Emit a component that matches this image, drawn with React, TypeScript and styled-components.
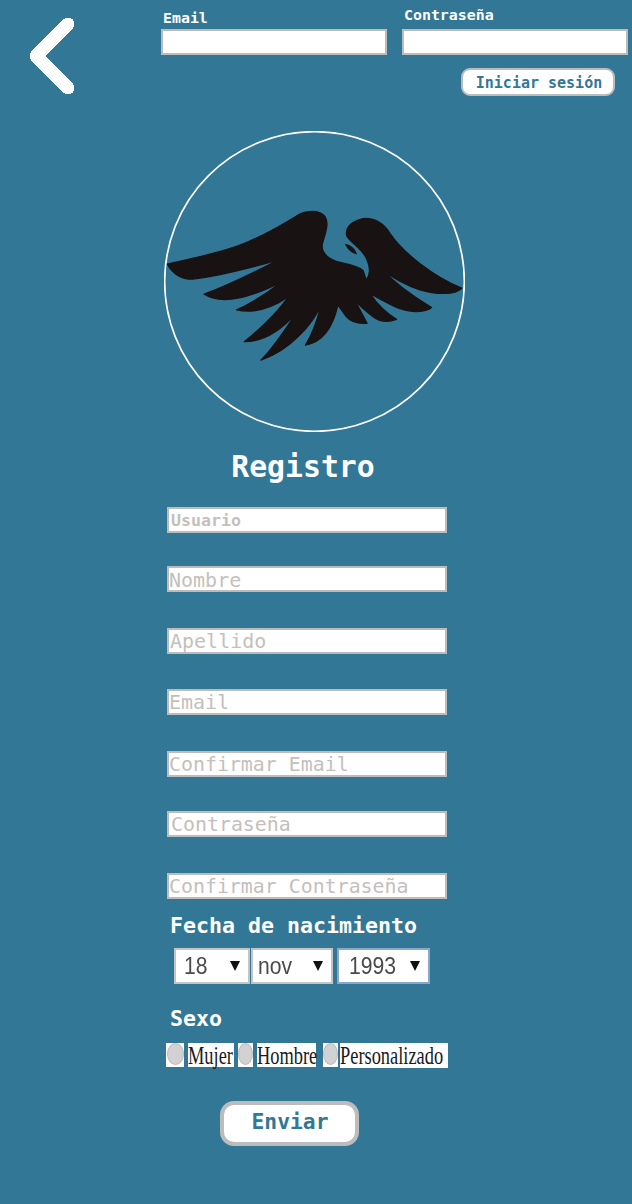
import styled, { createGlobalStyle } from 'styled-components';

const MONO = `'DejaVu Sans Mono', 'Liberation Mono', monospace`;
const BLUE = '#327896';
const EDGE = '#bcbcbc';

const GlobalStyle = createGlobalStyle`
  html, body { margin: 0; padding: 0; background: ${BLUE}; }
  * { box-sizing: border-box; }
`;

const Page = styled.div`
  width: 632px;
  height: 1204px;
  overflow: hidden;
  background: ${BLUE};
  font-family: ${MONO};
  color: #fff;
`;

// --- cabecera ---
const Header = styled.header`
  display: flex;
  align-items: flex-start;
  height: 131px;
`;

const BackArrow = styled.svg`
  flex: none;
  width: 161px;
  height: 100px;
  shape-rendering: crispEdges;
`;

const LoginBox = styled.div`
  width: 467px;
  display: flex;
  flex-direction: column;
`;

const LoginFields = styled.div`
  display: grid;
  grid-template-columns: 226px 226px;
  column-gap: 15px;
  height: 55px;
`;

const LoginField = styled.label<{ $lift: number }>`
  display: flex;
  flex-direction: column;
  justify-content: flex-end;
  span {
    font-size: 14.9px;
    font-weight: 700;
    line-height: 17px;
    margin: 0 0 ${p => p.$lift}px 2px;
  }
`;

const TopInput = styled.input`
  width: 100%;
  height: 26px;
  padding: 0;
  background: #fff;
  border: 2px solid ${EDGE};
  border-radius: 0;
  outline: none;
`;

const LoginButton = styled.button`
  align-self: flex-end;
  width: 154px;
  height: 28px;
  margin-top: 13px;
  margin-right: 13px;
  padding: 2px 0 0 2px;
  background: #fff;
  border: 2px solid ${EDGE};
  border-radius: 9px;
  color: ${BLUE};
  font-family: ${MONO};
  font-size: 15px;
  font-weight: 700;
`;

// --- logo ---
const Logo = styled.svg`
  display: block;
  width: 301px;
  height: 301px;
  margin-left: 164px;
`;

// --- formulario ---
const Title = styled.h1`
  width: 280px;
  margin: 17px 0 0 163px;
  text-align: center;
  font-size: 29.8px;
  font-weight: 700;
  line-height: 36px;
`;

const Fields = styled.div`
  display: flex;
  flex-direction: column;
  margin: 22px 0 0 167px;
`;

const TextField = styled.input<{ $gap: number; $size: number; $pad: number; $weight: number; $drop: number }>`
  width: 280px;
  height: 26px;
  margin-top: ${p => p.$gap}px;
  padding: ${p => p.$drop}px 0 0 ${p => p.$pad}px;
  background: #fff;
  border: 2px solid ${EDGE};
  border-radius: 0;
  outline: none;
  font-family: ${MONO};
  font-size: ${p => p.$size}px;
  font-weight: ${p => p.$weight};
  &::placeholder { color: #c4bfbd; opacity: 1; }
`;

const SectionLabel = styled.h2<{ $top: number }>`
  margin: ${p => p.$top}px 0 0 170px;
  font-size: 21.6px;
  font-weight: 700;
  line-height: 26px;
`;

const DateRow = styled.div`
  display: flex;
  margin: 9px 0 0 174px;
`;

const DateSelect = styled.div<{ $width: number; $gap: number; $edge: string; $pad: number }>`
  display: flex;
  align-items: center;
  justify-content: space-between;
  width: ${p => p.$width}px;
  height: 36px;
  margin-left: ${p => p.$gap}px;
  padding: 0 8px 0 ${p => p.$pad}px;
  background: #fff;
  border: 2px solid ${p => p.$edge};
  color: #4a4a4a;
  font-family: 'Liberation Sans', Arial, sans-serif;
  font-size: 24px;
  span {
    display: inline-block;
    transform-origin: left center;
    transform: scaleX(0.88);
    filter: blur(0.5px);
  }
  i {
    width: 0;
    height: 0;
    border-left: 5px solid transparent;
    border-right: 5px solid transparent;
    border-top: 10px solid #111;
  }
`;

const RadioRow = styled.div`
  display: flex;
  align-items: flex-start;
  margin: 11px 0 0 166px;
`;

const RadioBox = styled.span<{ $width: number; $gap: number }>`
  display: flex;
  justify-content: center;
  width: ${p => p.$width}px;
  height: 24px;
  margin-left: ${p => p.$gap}px;
  background: #fff;
  &::before {
    content: '';
    width: 15px;
    height: 20px;
    border-radius: 50%;
    background: #d2d2d2;
    border: 1px solid #bdbdbd;
    filter: blur(0.4px);
  }
`;

const RadioText = styled.span<{ $width: number; $gap: number; $tall: number }>`
  display: block;
  width: ${p => p.$width}px;
  height: ${p => p.$tall}px;
  margin-left: ${p => p.$gap}px;
  background: #fff;
  color: #1a1a1a;
  font-family: 'Liberation Serif', 'Times New Roman', serif;
  font-size: 18.4px;
  line-height: 25px;
  white-space: nowrap;
  b {
    display: inline-block;
    font-weight: 400;
    transform-origin: left center;
    transform: translateY(1px) scaleY(1.35);
  }
`;

const SendButton = styled.button`
  display: block;
  width: 139px;
  height: 45px;
  margin: 33px 0 0 220px;
  padding: 0 0 4px 1px;
  background: #fff;
  border: 4px solid ${EDGE};
  border-radius: 14px;
  color: ${BLUE};
  font-family: ${MONO};
  font-size: 21.3px;
  font-weight: 700;
`;

const EAGLE =
  'M55 433 C150 412 240 392 300 365 C350 343 400 315 440 290 C465 273 510 268 527 292 ' +
  'C540 315 525 345 518 375 C515 400 535 415 560 425 C590 433 625 438 640 452 L650 482 ' +
  'C662 465 662 440 650 415 C635 385 605 370 592 350 C585 330 600 305 640 297 C675 294 700 310 720 340 ' +
  'C760 400 850 470 935 505 C915 525 860 525 810 510 C770 497 730 475 698 450 ' +
  'C740 495 790 530 845 563 C825 580 775 578 735 560 C710 548 685 535 660 520 ' +
  'C680 550 710 580 740 598 C715 608 690 605 670 590 C650 575 630 558 615 540 ' +
  'L652 610 C625 612 605 608 590 590 L565 555 C555 600 530 665 468 675 C490 640 505 595 515 555 ' +
  'C490 610 425 690 335 720 C375 680 410 625 440 580 C400 625 345 665 285 665 C335 625 385 575 418 530 ' +
  'C375 560 320 582 262 570 C310 548 360 515 395 487 C320 525 225 560 165 523 ' +
  'C240 495 320 455 388 420 C300 445 200 470 130 478 C95 478 70 460 55 433 Z';

const fields = [
  { id: 'Usuario', gap: 0, size: 16.6, pad: 2, weight: 700, drop: 0 },
  { id: 'Nombre', gap: 33, size: 20, pad: 0, weight: 400, drop: 2 },
  { id: 'Apellido', gap: 36, size: 20, pad: 1, weight: 400, drop: 0 },
  { id: 'Email', gap: 35, size: 20, pad: 0, weight: 400, drop: 0 },
  { id: 'Confirmar Email', gap: 36, size: 19.9, pad: 0, weight: 400, drop: 0 },
  { id: 'Contraseña', gap: 34, size: 19.9, pad: 2, weight: 400, drop: 0 },
  { id: 'Confirmar Contraseña', gap: 36, size: 19.9, pad: 0, weight: 400, drop: 0 },
];

const App = () => (
  <Page>
    <GlobalStyle />
    <Header>
      <BackArrow viewBox="0 0 161 100" aria-label="Volver">
        <polyline
          points="68,24 36,56 68,88"
          fill="none"
          stroke="#fff"
          strokeWidth="13"
          strokeLinecap="round"
          strokeLinejoin="round"
        />
      </BackArrow>
      <LoginBox>
        <LoginFields>
          <LoginField $lift={2}>
            <span>Email</span>
            <TopInput type="text" />
          </LoginField>
          <LoginField $lift={5}>
            <span>Contraseña</span>
            <TopInput type="password" />
          </LoginField>
        </LoginFields>
        <LoginButton type="button">Iniciar sesión</LoginButton>
      </LoginBox>
    </Header>

    <Logo viewBox="45 35 900 900">
      <circle cx="495" cy="485" r="448" fill="none" stroke="#fff" strokeWidth="5" />
      <path d={EAGLE} fill="#181213" stroke="#181213" strokeWidth="4" strokeLinejoin="round" />
      <path d="M586 372 C605 375 618 388 622 404 C605 400 592 388 586 372 Z" fill="#181213" />
    </Logo>

    <Title>Registro</Title>

    <Fields>
      {fields.map(f => (
        <TextField
          key={f.id}
          placeholder={f.id}
          $gap={f.gap}
          $size={f.size}
          $pad={f.pad}
          $weight={f.weight}
          $drop={f.drop}
        />
      ))}
    </Fields>

    <SectionLabel $top={14}>Fecha de nacimiento</SectionLabel>
    <DateRow>
      <DateSelect $width={76} $gap={0} $edge="#c4c4c4" $pad={8}><span>18</span><i /></DateSelect>
      <DateSelect $width={82} $gap={1} $edge="#c4c4c4" $pad={5}><span>nov</span><i /></DateSelect>
      <DateSelect $width={93} $gap={4} $edge="#8aa6c8" $pad={10}><span>1993</span><i /></DateSelect>
    </DateRow>

    <SectionLabel $top={22}>Sexo</SectionLabel>
    <RadioRow>
      <RadioBox $width={18} $gap={0} />
      <RadioText $width={46} $gap={4} $tall={24}><b>Mujer</b></RadioText>
      <RadioBox $width={15} $gap={4} />
      <RadioText $width={59} $gap={4} $tall={24}><b>Hombre</b></RadioText>
      <RadioBox $width={15} $gap={7} />
      <RadioText $width={108} $gap={2} $tall={25}><b>Personalizado</b></RadioText>
    </RadioRow>

    <SendButton type="button">Enviar</SendButton>
  </Page>
);

export default App;
